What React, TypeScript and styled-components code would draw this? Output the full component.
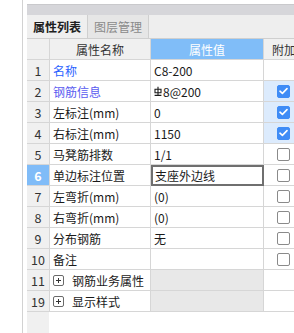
import { FC } from "react";
import styled, { createGlobalStyle, css } from "styled-components";

const GlobalStyle = createGlobalStyle`
  html, body {
    margin: 0;
    padding: 0;
    background: #ffffff;
  }
  body {
    font-family: "Noto Sans CJK SC", "Noto Sans", sans-serif;
    font-size: 12px;
    color: #1a1a1a;
  }
`;

const Page = styled.div`
  display: flex;
  width: 294px;
  height: 333px;
  overflow: hidden;
`;

const Gutter = styled.div`
  flex: 0 0 22px;
  border-right: 1px solid #d2d2d2;
`;

const Panel = styled.div`
  flex: 0 0 auto;
  margin-left: 4px;
  width: 320px;
  display: flex;
  flex-direction: column;
  padding-top: 4px;
`;

const TitleStrip = styled.div`
  height: 10px;
  background: #d6d6da;
  border-top: 1px solid #c9c9cc;
`;

const TabBar = styled.div`
  display: flex;
  height: 23px;
  background: #eeeeee;
  border-bottom: 1px solid #cfcfcf;
`;

const Tab = styled.div<{ $active?: boolean }>`
  width: 60px;
  display: flex;
  align-items: center;
  justify-content: center;
  border-right: 1px solid #cfcfcf;
  color: ${(p) => (p.$active ? "#202020" : "#8a8a8a")};
  background: ${(p) => (p.$active ? "#efefef" : "#e6e6e6")};
  font-weight: ${(p) => (p.$active ? 600 : 400)};
`;

const Grid = styled.div`
  display: grid;
  grid-template-columns: 23px 101px 113px 83px;
  grid-auto-rows: 21px;
`;

const Cell = styled.div`
  display: flex;
  align-items: center;
  border-right: 1px solid #d6d6d6;
  border-bottom: 1px solid #d6d6d6;
  white-space: nowrap;
  overflow: hidden;
  box-sizing: border-box;
`;

const HeadCell = styled(Cell)<{ $blue?: boolean; $left?: boolean }>`
  justify-content: ${(p) => (p.$left ? "flex-start" : "center")};
  padding-left: ${(p) => (p.$left ? "8px" : "0")};
  background: ${(p) => (p.$blue ? "#80bdf8" : "#f0f0f0")};
  color: ${(p) => (p.$blue ? "#ffffff" : "#333333")};
`;

const NumCell = styled(Cell)<{ $selected?: boolean }>`
  justify-content: center;
  background: ${(p) => (p.$selected ? "#80bcf8" : "#f0f0f0")};
  color: ${(p) => (p.$selected ? "#ffffff" : "#333333")};
  font-weight: ${(p) => (p.$selected ? 700 : 400)};
  font-size: 12.5px;
`;

const NameCell = styled(Cell)<{ $tone?: "link" | "link2" }>`
  padding-left: 3px;
  gap: 8px;
  ${(p) =>
    p.$tone === "link" &&
    css`
      color: #2a62ff;
    `}
  ${(p) =>
    p.$tone === "link2" &&
    css`
      color: #5a5cf0;
    `}
`;

const ValueCell = styled(Cell)<{ $editing?: boolean; $group?: boolean }>`
  padding-left: 3px;
  background: ${(p) => (p.$group ? "#e8e8e8" : "#ffffff")};
  ${(p) =>
    p.$editing &&
    css`
      border: 2px solid #6f6f6f;
      padding-left: 2px;
    `}
`;

const ExtraCell = styled(Cell)<{ $on?: boolean }>`
  padding-left: 13px;
  background: ${(p) => (p.$on ? "#dcebfd" : "#ffffff")};
`;

const Box = styled.span<{ $checked?: boolean }>`
  display: flex;
  align-items: center;
  justify-content: center;
  width: 13px;
  height: 13px;
  box-sizing: border-box;
  border-radius: 2px;
  background: ${(p) => (p.$checked ? "#3f8cf6" : "#ffffff")};
  border: 1px solid ${(p) => (p.$checked ? "#3f8cf6" : "#8a8a8a")};
`;

const Filler = styled.div`
  flex: 1;
  display: flex;
`;

const FillerNum = styled.div`
  width: 22px;
  background: #f0f0f0;
`;

const RebarMark = styled.svg`
  margin-right: 1px;
  flex: 0 0 auto;
`;

const Rebar: FC = () => (
  <RebarMark width="8" height="11" viewBox="0 0 8 11">
    <path
      d="M1 3.2h6v3.6H1z M4 0.8v8.4 M0.6 9.4h6.8"
      fill="none"
      stroke="#1a1a1a"
      strokeWidth="1.1"
    />
  </RebarMark>
);

const Check: FC<{ checked?: boolean }> = ({ checked }) => (
  <Box $checked={checked}>
    {checked && (
      <svg width="9" height="8" viewBox="0 0 9 8">
        <polyline
          points="1,4.2 3.4,6.4 8,1.6"
          fill="none"
          stroke="#ffffff"
          strokeWidth="1.6"
          strokeLinecap="round"
          strokeLinejoin="round"
        />
      </svg>
    )}
  </Box>
);

const Plus: FC = () => (
  <svg width="11" height="11" viewBox="0 0 11 11">
    <rect x="0.5" y="0.5" width="10" height="10" rx="1.5" fill="#fff" stroke="#6a6a6a" />
    <path d="M3 5.5h5 M5.5 3v5" stroke="#333" strokeWidth="1" />
  </svg>
);

type Row = {
  no: string;
  name: string;
  value?: string;
  tone?: "link" | "link2";
  rebar?: boolean;
  check?: "on" | "off";
  editing?: boolean;
  group?: boolean;
};

const rows: Row[] = [
  { no: "1", name: "名称", value: "C8-200", tone: "link" },
  { no: "2", name: "钢筋信息", value: "8@200", tone: "link2", rebar: true, check: "on" },
  { no: "3", name: "左标注(mm)", value: "0", check: "on" },
  { no: "4", name: "右标注(mm)", value: "1150", check: "on" },
  { no: "5", name: "马凳筋排数", value: "1/1", check: "off" },
  { no: "6", name: "单边标注位置", value: "支座外边线", check: "off", editing: true },
  { no: "7", name: "左弯折(mm)", value: "(0)", check: "off" },
  { no: "8", name: "右弯折(mm)", value: "(0)", check: "off" },
  { no: "9", name: "分布钢筋", value: "无", check: "off" },
  { no: "10", name: "备注", value: "", check: "off" },
  { no: "11", name: "钢筋业务属性", group: true },
  { no: "19", name: "显示样式", group: true },
];

export default function App() {
  return (
    <>
      <GlobalStyle />
      <Page>
        <Gutter />
        <Panel>
          <TitleStrip />
          <TabBar>
            <Tab $active>属性列表</Tab>
            <Tab>图层管理</Tab>
          </TabBar>
          <Grid>
            <HeadCell />
            <HeadCell>属性名称</HeadCell>
            <HeadCell $blue>属性值</HeadCell>
            <HeadCell $left>附加属性</HeadCell>
            {rows.map((r) => (
              <RowCells key={r.no} row={r} />
            ))}
          </Grid>
          <Filler>
            <FillerNum />
          </Filler>
        </Panel>
      </Page>
    </>
  );
}

const RowCells: FC<{ row: Row }> = ({ row }) => (
  <>
    <NumCell $selected={row.editing}>{row.no}</NumCell>
    <NameCell $tone={row.tone}>
      {row.group && <Plus />}
      {row.name}
    </NameCell>
    <ValueCell $editing={row.editing} $group={row.group}>
      {row.rebar && <Rebar />}
      {row.value}
    </ValueCell>
    <ExtraCell $on={row.check === "on"}>
      {row.check && <Check checked={row.check === "on"} />}
    </ExtraCell>
  </>
);
